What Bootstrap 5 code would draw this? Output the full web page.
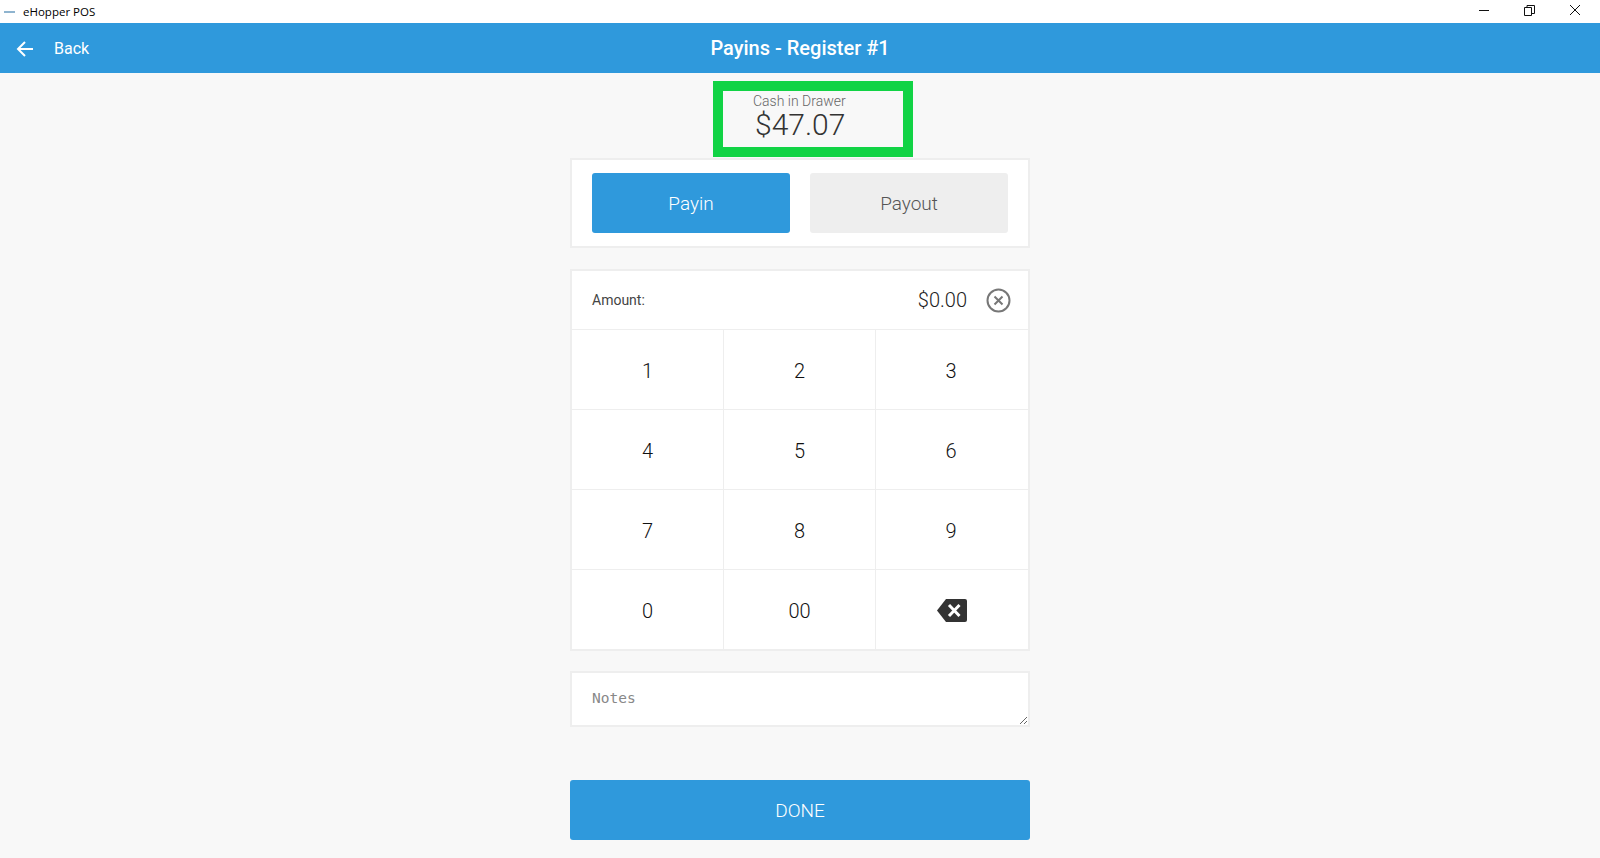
<!DOCTYPE html>
<html lang="en">
<head>
    <meta charset="UTF-8">
    <meta name="viewport" content="width=device-width, initial-scale=1.0">
    <title>eHopper POS</title>
    <link href="https://cdn.jsdelivr.net/npm/bootstrap@5.3.1/dist/css/bootstrap.min.css" rel="stylesheet">
    <style>
        html, body {
            height: 100%;
            overflow: hidden;
        }
        body {
            background-color: #f8f8f8;
            font-family: Roboto, "Liberation Sans", sans-serif;
            font-weight: 300;
            color: #333;
        }
        .win-bar {
            height: 23px;
            background: #fff;
            font-family: "Open Sans", "Liberation Sans", sans-serif;
            font-weight: 400;
            font-size: 11.5px;
            color: #000;
        }
        .win-logo {
            width: 11px;
            margin-left: 4px;
            margin-right: 8px;
        }
        .win-controls {
            width: 150px;
        }
        .app-bar {
            height: 50px;
            background: #2f99dc;
            color: #fff;
        }
        .app-back {
            font-size: 16px;
            font-weight: 400;
            padding-left: 16px;
            padding-top: 1px;
            width: 300px;
            gap: 20px;
        }
        .app-title {
            font-size: 20px;
            font-weight: 500;
        }
        .app-side {
            width: 300px;
        }
        .drawer-box {
            width: 200px;
            height: 76px;
            margin: 8px 0 1px calc(50% - 87px);
            border: 10px solid #11d345;
            padding-left: 30px;
            line-height: 1;
        }
        .drawer-label {
            font-size: 14px;
            color: #666;
            padding-top: 3px;
        }
        .drawer-amount {
            font-size: 30px;
            line-height: 30px;
            font-weight: 300;
            color: #333;
            margin-top: 2px;
            padding-left: 2px;
        }
        .pane {
            width: 460px;
            margin-left: auto;
            margin-right: auto;
            background: #fff;
            border: 2px solid #eee;
        }
        .type-pane {
            height: 90px;
            padding: 13px 20px;
            gap: 20px;
        }
        .type-btn {
            flex: 1;
            height: 60px;
            padding-top: 4px;
            border: 0;
            border-radius: 3px;
            font-size: 19px;
            font-weight: 300;
        }
        .type-on, .done-btn {
            background: #2f99dc;
            color: #fff;
        }
        .type-off {
            background: #eee;
            color: #555;
        }
        .pad-pane {
            margin-top: 21px;
        }
        .amount-row {
            height: 59px;
            padding: 0 17px 0 20px;
            border-bottom: 1px solid #eee;
        }
        .amount-label {
            font-size: 14px;
            font-weight: 400;
            color: #444;
        }
        .amount-value {
            font-size: 20px;
            color: #222;
            margin-right: 19px;
        }
        .key-grid {
            display: grid;
            grid-template-columns: 152px 152px 152px;
            grid-template-rows: 80px 80px 80px 79px;
        }
        .key-cell {
            padding-top: 2px;
            font-size: 20px;
            font-weight: 300;
            color: #111;
            border-right: 1px solid #eee;
            border-bottom: 1px solid #eee;
        }
        .key-cell:nth-child(3n) {
            border-right: 0;
            padding-right: 2px;
        }
        .key-cell:nth-last-child(-n+3) {
            border-bottom: 0;
        }
        .key-cell:last-child {
            padding-right: 0;
        }
        .notes-input {
            display: block;
            width: 460px;
            height: 56px;
            margin: 20px auto 0;
            padding: 16px 20px 0;
            background: #fff;
            border: 2px solid #eee;
            outline: 0;
            font-family: "DejaVu Sans Mono", monospace;
            font-size: 14.5px;
            line-height: 18px;
        }
        .notes-input::placeholder {
            color: #888;
        }
        .done-btn {
            display: block;
            width: 460px;
            height: 60px;
            margin: 53px auto 0;
            padding-top: 4px;
            border: 0;
            border-radius: 3px;
            font-size: 19px;
            font-weight: 300;
        }
    </style>
</head>
<body>
    <!-- Window title bar -->
    <div class="win-bar d-flex align-items-center justify-content-between">
        <div class="d-flex align-items-center">
            <svg class="win-logo" width="11" height="4" viewBox="0 0 11 4"><rect width="11" height="2" y="1" fill="#8fb4cf"/></svg>
            <span>eHopper POS</span>
        </div>
        <div class="win-controls d-flex align-items-center justify-content-between">
            <svg width="150" height="23" viewBox="0 0 150 23" fill="none" stroke="#111" stroke-width="1">
                <path d="M29 10.5h10"/>
                <path d="M74.5 7.5h7v8h-7z M77 7.5v-2h7.500v8h-3"/>
                <path d="M120 5l10 10 M130 5l-10 10"/>
            </svg>
        </div>
    </div>

    <!-- App header -->
    <div class="app-bar d-flex align-items-center justify-content-between">
        <div class="app-back d-flex align-items-center">
            <svg width="18" height="16" viewBox="0 0 18 16" fill="none" stroke="#fff" stroke-width="2">
                <path d="M17 8H2 M9 1L2 8l7 7"/>
            </svg>
            <span>Back</span>
        </div>
        <div class="app-title">Payins - Register #1</div>
        <div class="app-side"></div>
    </div>

    <main>
        <div class="drawer-box">
            <div class="drawer-label">Cash in Drawer</div>
            <div class="drawer-amount">$47.07</div>
        </div>

        <div class="pane type-pane d-flex align-items-start">
            <button type="button" class="type-btn type-on">Payin</button>
            <button type="button" class="type-btn type-off">Payout</button>
        </div>

        <div class="pane pad-pane">
            <div class="amount-row d-flex align-items-center">
                <span class="amount-label me-auto">Amount:</span>
                <span class="amount-value">$0.00</span>
                <svg width="25" height="25" viewBox="0 0 25 25" fill="none" stroke="#777" stroke-width="2">
                    <circle cx="12.500" cy="12.500" r="11"/>
                    <path d="M8.500 8.500l8 8 M16.500 8.500l-8 8"/>
                </svg>
            </div>
            <div class="key-grid">
                <div class="key-cell d-flex align-items-center justify-content-center">1</div>
                <div class="key-cell d-flex align-items-center justify-content-center">2</div>
                <div class="key-cell d-flex align-items-center justify-content-center">3</div>
                <div class="key-cell d-flex align-items-center justify-content-center">4</div>
                <div class="key-cell d-flex align-items-center justify-content-center">5</div>
                <div class="key-cell d-flex align-items-center justify-content-center">6</div>
                <div class="key-cell d-flex align-items-center justify-content-center">7</div>
                <div class="key-cell d-flex align-items-center justify-content-center">8</div>
                <div class="key-cell d-flex align-items-center justify-content-center">9</div>
                <div class="key-cell d-flex align-items-center justify-content-center">0</div>
                <div class="key-cell d-flex align-items-center justify-content-center">00</div>
                <div class="key-cell d-flex align-items-center justify-content-center">
                    <svg width="30" height="23" viewBox="0 0 30 23">
                        <path d="M9 0h19a2 2 0 0 1 2 2v19a2 2 0 0 1-2 2H9L0 11.500z" fill="#333"/>
                        <path d="M12 6l10.500 11 M22.500 6L12 17" stroke="#fff" stroke-width="3" fill="none"/>
                    </svg>
                </div>
            </div>
        </div>

        <textarea class="notes-input" placeholder="Notes"></textarea>

        <button type="button" class="done-btn">DONE</button>
    </main>

    <script src="https://cdn.jsdelivr.net/npm/bootstrap@5.3.1/dist/js/bootstrap.bundle.min.js"></script>
</body>
</html>
